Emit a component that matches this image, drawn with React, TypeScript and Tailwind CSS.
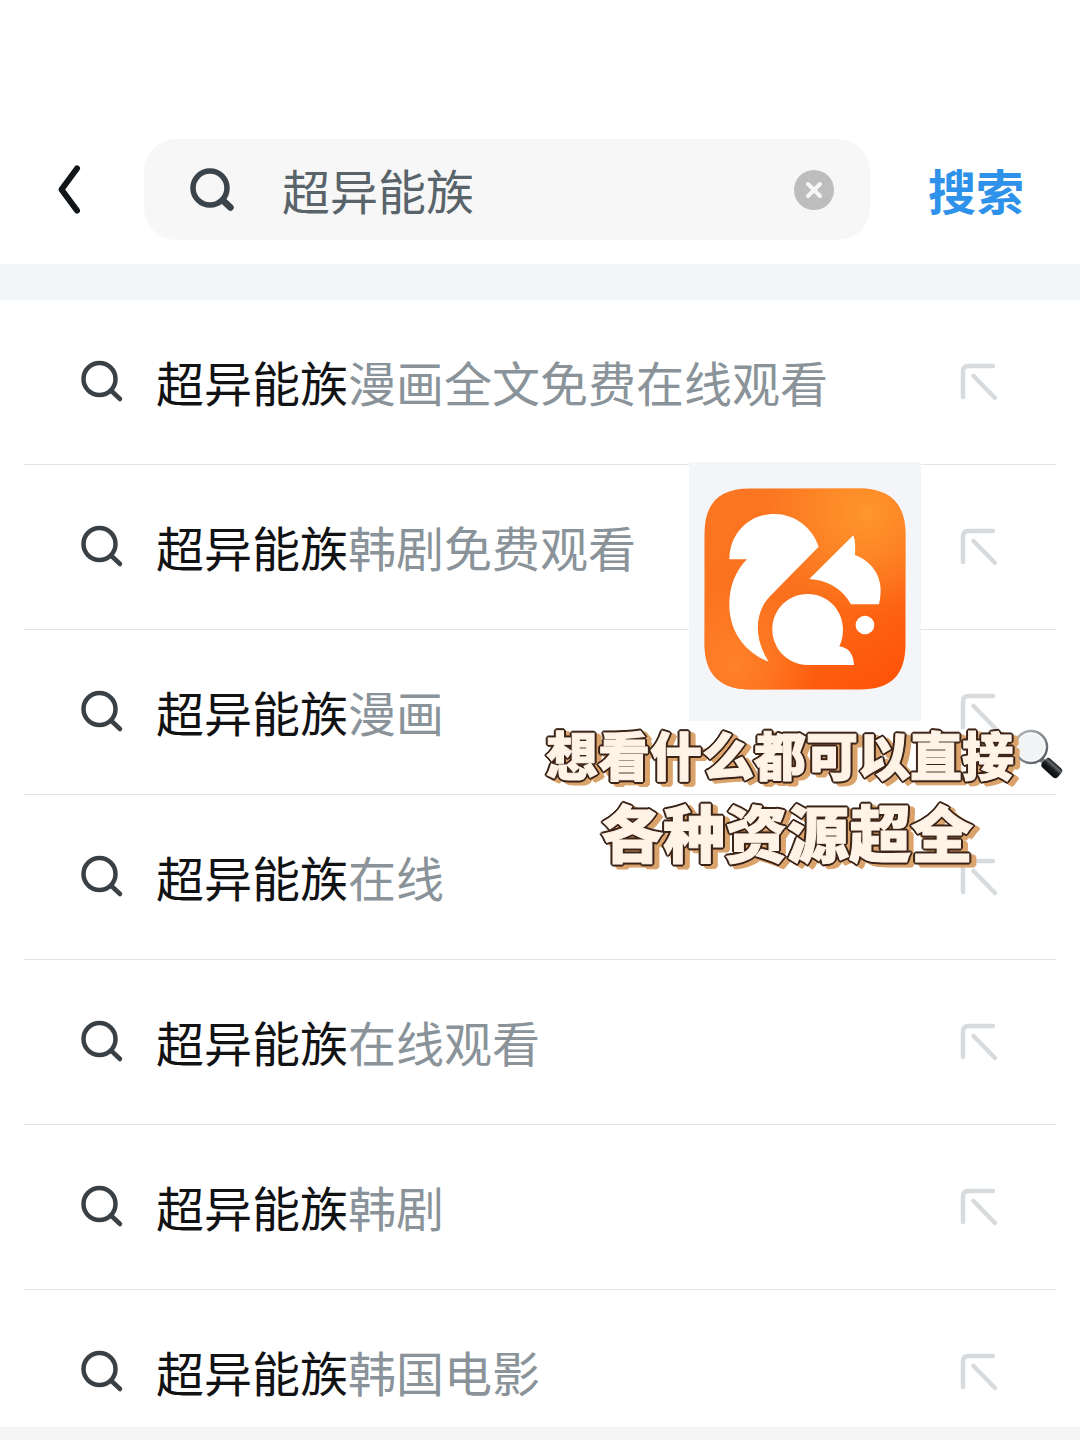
import React, { useState } from 'react';

interface Suggestion {
  keyword: string;
  rest: string;
}

const suggestions: Suggestion[] = [
  { keyword: '超异能族', rest: '漫画全文免费在线观看' },
  { keyword: '超异能族', rest: '韩剧免费观看' },
  { keyword: '超异能族', rest: '漫画' },
  { keyword: '超异能族', rest: '在线' },
  { keyword: '超异能族', rest: '在线观看' },
  { keyword: '超异能族', rest: '韩剧' },
  { keyword: '超异能族', rest: '韩国电影' },
];

// cream lettering, thin dark outline, hard tan shadow
const stickerText =
  'whitespace-nowrap font-black text-[#fff3e8] [-webkit-text-stroke:1px_#fff3e8] [filter:drop-shadow(1px_1px_0_#3b2417)_drop-shadow(-1px_-1px_0_#3b2417)_drop-shadow(1px_-1px_0_#3b2417)_drop-shadow(-1px_1px_0_#3b2417)_drop-shadow(5px_3px_0_#dba36c)]';

const BackIcon = () => (
  <svg viewBox="0 0 30 52" className="w-[30px] h-[52px]" fill="none" stroke="#111518" strokeWidth="6" strokeLinecap="round" strokeLinejoin="round">
    <path d="M21 4.500L5.500 25.500l15.500 21" />
  </svg>
);

const FieldSearchIcon = () => (
  <svg viewBox="0 0 44 44" className="w-11 h-11 shrink-0" fill="none" stroke="#3a444a" strokeLinecap="round">
    <circle cx="20" cy="20" r="17" strokeWidth="5.500" />
    <path d="M33 32.500l7.500 7" strokeWidth="6.500" />
  </svg>
);

const RowSearchIcon = () => (
  <svg viewBox="0 0 44 44" className="w-11 h-11 shrink-0" fill="none" stroke="#3a4146" strokeWidth="4.500" strokeLinecap="round">
    <circle cx="19.500" cy="19" r="16" />
    <path d="M31 30.500l9 8.500" />
  </svg>
);

const FillIcon = () => (
  <svg viewBox="0 0 40 40" className="w-10 h-10 shrink-0" fill="none" stroke="#d7dbde" strokeWidth="4.500" strokeLinecap="round">
    <path d="M3 35V9.500Q3 4 8.500 4H33" />
    <path d="M13.500 14L35 36" />
  </svg>
);

const ClearIcon = () => (
  <svg viewBox="0 0 40 40" className="w-10 h-10" fill="none">
    <circle cx="20" cy="20" r="20" fill="#bdbdbd" />
    <path d="M14 14l12 12M26 14L14 26" stroke="#f7f7f7" strokeWidth="4" strokeLinecap="round" />
  </svg>
);

const SquirrelLogo = () => (
  <svg viewBox="0 0 202 202" className="w-[202px] h-[202px]">
    <defs>
      <linearGradient id="base" x1="0.2" y1="0" x2="0.8" y2="1">
        <stop offset="0" stopColor="#fb7622" />
        <stop offset="0.5" stopColor="#fb701c" />
        <stop offset="1" stopColor="#fe5509" />
      </linearGradient>
      <radialGradient id="glowTop" cx="0.8" cy="0.12" r="0.5">
        <stop offset="0" stopColor="#ff962c" />
        <stop offset="1" stopColor="#ff962c" stopOpacity="0" />
      </radialGradient>
      <radialGradient id="glowBottom" cx="0.15" cy="0.88" r="0.4">
        <stop offset="0" stopColor="#ff822b" />
        <stop offset="1" stopColor="#ff822b" stopOpacity="0" />
      </radialGradient>
      <path id="tile" d="M46 0.500H156C187 0.500 201.500 17 201.500 46V156C201.500 187 187 201.500 156 201.500H46C15 201.500 0.500 185 0.500 156V46C0.500 15 15 0.500 46 0.500Z" />
    </defs>
    <use href="#tile" fill="url(#base)" />
    <use href="#tile" fill="url(#glowTop)" />
    <use href="#tile" fill="url(#glowBottom)" />
    {/* drawn in a 3x grid */}
    <g transform="scale(0.3333) translate(-72 -115)" fill="#fff">
      <path d="M148 329C149 252 206 193 283 193C345 193 397 234 416 291L270 440C224 488 220 565 266 636C192 607 148 542 148 465C148 410 166 364 201 329Z" />
      <path d="M388 388L520 257C527 275 526 295 525 316C572 333 602 375 602 420C602 437 600 451 597 464H513C487 417 440 390 388 388Z" />
      <path d="M383 433C442 433 489 480 489 539C489 558 486 575 478 590C506 593 521 615 522 646H383C324 646 277 598 277 539C277 480 324 433 383 433Z" />
      <circle cx="555" cy="526" r="28" />
    </g>
  </svg>
);

const MagnifierIcon = () => (
  <svg viewBox="2 -1 50 50" className="w-[50px] h-[50px] shrink-0">
    <defs>
      <linearGradient id="rim" x1="0" y1="0" x2="1" y2="1">
        <stop offset="0" stopColor="#b9bec4" />
        <stop offset="0.5" stopColor="#858b92" />
        <stop offset="1" stopColor="#4d5359" />
      </linearGradient>
      <linearGradient id="grip" x1="0" y1="1" x2="0" y2="0">
        <stop offset="0" stopColor="#08090a" />
        <stop offset="0.5" stopColor="#1d2023" />
        <stop offset="0.75" stopColor="#63686d" />
        <stop offset="1" stopColor="#15171a" />
      </linearGradient>
    </defs>
    <path d="M29 29l5 5" stroke="#73797f" strokeWidth="5" />
    <circle cx="19" cy="17" r="16" fill="#f2f3f4" stroke="url(#rim)" strokeWidth="2.500" />
    <circle cx="19" cy="17" r="14" fill="none" stroke="#fff" strokeWidth="1" />
    <rect x="0" y="-6" width="21" height="12" rx="3.500" fill="url(#grip)" transform="translate(32 31) rotate(42)" />
  </svg>
);

export default function App() {
  const [query, setQuery] = useState('超异能族');

  return (
    <div className="min-h-screen flex flex-col bg-[#f5f5f5] font-['Noto_Sans_CJK_SC',sans-serif]">
      <header className="bg-white pt-[139px] pb-6 px-14">
        <form className="flex items-center gap-[58px]" onSubmit={(e) => e.preventDefault()}>
          <button type="button" aria-label="返回" className="shrink-0">
            <BackIcon />
          </button>
          <div className="flex-1 min-w-0 h-[101px] flex items-center bg-[#f7f7f7] rounded-[32px] pl-[46px] pr-9">
            <FieldSearchIcon />
            <input
              type="text"
              aria-label="搜索"
              value={query}
              onChange={(e) => setQuery(e.target.value)}
              className="flex-1 min-w-0 ml-12 pb-[2px] bg-transparent outline-none text-[48px] leading-[72px] text-[#59636a]"
            />
            <button type="button" aria-label="清除" onClick={() => setQuery('')}>
              <ClearIcon />
            </button>
          </div>
          <button type="submit" className="shrink-0 pb-[2px] text-[48px] leading-[72px] font-bold text-[#2f92ea]">
            搜索
          </button>
        </form>
      </header>

      <div className="h-9 bg-[#f3f6f8]" />

      <main className="relative bg-white">
        <ul className="px-6">
          {suggestions.map((s) => (
            <li key={s.rest} className="border-b border-[#e3e5e7] last:border-b-0 group">
              <button
                type="button"
                onClick={() => setQuery(s.keyword + s.rest)}
                className="w-full flex items-center px-14 pt-[60px] pb-[60px] group-last:pb-[33px] text-left"
              >
                <RowSearchIcon />
                <span className="flex-1 ml-8 pb-[2px] text-[48px] leading-[42px] text-[#899399]">
                  <span className="text-[#111214]">{s.keyword}</span>
                  {s.rest}
                </span>
                <FillIcon />
              </button>
            </li>
          ))}
        </ul>

        {/* Sticker over the list */}
        <div className="absolute top-[162px] right-4 flex flex-col items-center pointer-events-none">
          <div className="bg-[#f3f5f8] px-[15px] pt-[26px] pb-[31px]">
            <SquirrelLogo />
          </div>
          <div className="flex items-center text-[52px] leading-[66px]">
            <span className={stickerText}>想看什么都可以直接</span>
            <MagnifierIcon />
          </div>
          <p className={`mr-9 text-[62px] leading-[88px] ${stickerText}`}>各种资源超全</p>
        </div>
      </main>
    </div>
  );
}
